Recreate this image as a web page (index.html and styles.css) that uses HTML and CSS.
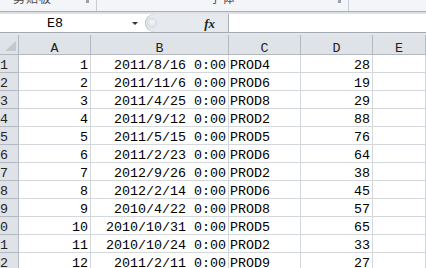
FILE: index.html
```html
<!DOCTYPE html>
<html>
<head>
<meta charset="utf-8">
<link rel="stylesheet" href="styles.css">
</head>
<body>
<div class="ribbon">
  <div class="rgroup g1"><span class="rlabel l1">剪贴板</span><span class="launcher"></span></div>
  <div class="rgroup g2"><span class="rlabel l2">字体</span><span class="launcher"></span></div>
  <div class="rgroup g3"></div>
</div>
<div class="band1"></div>
<div class="fbar">
  <div class="namebox"><span class="nbtext">E8</span><span class="arrow"></span></div>
  <div class="fxzone"><span class="grip"></span><span class="fx">fx</span></div>
  <div class="finput"></div>
</div>
<div class="band2"></div>
<div class="grid">
  <div class="hd corner"><span class="tri"></span></div><div class="hd ch">A</div><div class="hd ch">B</div><div class="hd ch">C</div><div class="hd ch">D</div><div class="hd ch">E</div>

  <div class="hd rh"><span>1</span></div><div class="c r">1</div><div class="c r">2011/8/16 0:00</div><div class="c l">PROD4</div><div class="c r">28</div><div class="c"></div>
  <div class="hd rh"><span>2</span></div><div class="c r">2</div><div class="c r">2011/11/6 0:00</div><div class="c l">PROD6</div><div class="c r">19</div><div class="c"></div>
  <div class="hd rh"><span>3</span></div><div class="c r">3</div><div class="c r">2011/4/25 0:00</div><div class="c l">PROD8</div><div class="c r">29</div><div class="c"></div>
  <div class="hd rh"><span>4</span></div><div class="c r">4</div><div class="c r">2011/9/12 0:00</div><div class="c l">PROD2</div><div class="c r">88</div><div class="c"></div>
  <div class="hd rh"><span>5</span></div><div class="c r">5</div><div class="c r">2011/5/15 0:00</div><div class="c l">PROD5</div><div class="c r">76</div><div class="c"></div>
  <div class="hd rh"><span>6</span></div><div class="c r">6</div><div class="c r">2011/2/23 0:00</div><div class="c l">PROD6</div><div class="c r">64</div><div class="c"></div>
  <div class="hd rh"><span>7</span></div><div class="c r">7</div><div class="c r">2012/9/26 0:00</div><div class="c l">PROD2</div><div class="c r">38</div><div class="c"></div>
  <div class="hd rh"><span>8</span></div><div class="c r">8</div><div class="c r">2012/2/14 0:00</div><div class="c l">PROD6</div><div class="c r">45</div><div class="c"></div>
  <div class="hd rh"><span>9</span></div><div class="c r">9</div><div class="c r">2010/4/22 0:00</div><div class="c l">PROD8</div><div class="c r">57</div><div class="c"></div>
  <div class="hd rh"><span>10</span></div><div class="c r">10</div><div class="c r">2010/10/31 0:00</div><div class="c l">PROD5</div><div class="c r">65</div><div class="c"></div>
  <div class="hd rh"><span>11</span></div><div class="c r">11</div><div class="c r">2010/10/24 0:00</div><div class="c l">PROD2</div><div class="c r">33</div><div class="c"></div>
  <div class="hd rh"><span>12</span></div><div class="c r">12</div><div class="c r">2011/2/11 0:00</div><div class="c l">PROD9</div><div class="c r">27</div><div class="c"></div>
</div>
</body>
</html>
```

FILE: styles.css
```css
html, body {
  margin: 0;
  padding: 0;
  width: 426px;
  height: 268px;
  overflow: hidden;
  background: #ffffff;
}
body {
  font-family: "Liberation Mono", "DejaVu Sans Mono", monospace;
  font-size: 13.33px;
  color: #000;
}

/* ribbon strip (cut off) */
.ribbon {
  display: flex;
  height: 11px;
  background: #f3f5f8;
  border-bottom: 1px solid #a9afb8;
  overflow: hidden;
}
.rgroup {
  position: relative;
  display: flex;
  border-right: 1px solid #c9ced5;
  height: 11px;
}
.g1 { width: 96px; }
.g2 { width: 251px; justify-content: center; }
.g3 { flex: 1; border-right: none; }
.rlabel {
  font-family: "Noto Sans CJK SC", sans-serif;
  font-size: 12px;
  line-height: 12px;
  color: #4c4c4c;
  margin-top: -8px;
}
.l1 { margin-left: 13px; letter-spacing: 1px; }
.l2 { letter-spacing: 1px; }
.launcher {
  position: absolute;
  right: 7px;
  top: 0;
  width: 3px;
  height: 3px;
  background: #9aa0a8;
}

.band1 {
  height: 2px;
  background: #dde1e6;
}

/* formula bar */
.fbar {
  display: flex;
  height: 18px;
  border-bottom: 1px solid #a3a9b1;
  background: #ffffff;
}
.namebox {
  width: 145px;
  display: flex;
  align-items: center;
}
.nbtext {
  width: 110px;
  text-align: center;
  line-height: 15px;
  padding-top: 1px;
}
.arrow {
  margin-left: 22px;
  width: 0;
  height: 0;
  border-left: 3px solid transparent;
  border-right: 3px solid transparent;
  border-top: 3px solid #333;
  margin-top: 1px;
}
.fxzone {
  width: 83px;
  display: flex;
  align-items: center;
  justify-content: space-between;
  background: #e6e9ed;
  border-radius: 9px 0 0 9px;
  box-shadow: inset 1px 0 0 #bfc4cb;
}
.grip {
  width: 8px;
  height: 8px;
  margin-left: 3px;
  border-radius: 50%;
  background: radial-gradient(circle at 50% 40%, #f6f7f9 0%, #dfe2e6 70%, #cfd3d8 100%);
  box-shadow: 0 0 0 1px #d4d8dd;
}
.fx {
  font-family: "Liberation Serif", serif;
  font-style: italic;
  font-weight: bold;
  font-size: 13px;
  line-height: 13px;
  margin-right: 13px;
  color: #222;
}
.finput {
  flex: 1;
  border-left: 1px solid #a9b0b8;
  background: #fff;
}
.band2 {
  height: 2px;
  background: #e3e6ea;
}

/* grid */
.grid {
  display: grid;
  grid-template-columns: 19px 72px 138px 72px 72px 1fr;
  grid-template-rows: 20px;
  grid-auto-rows: 18px;
}
.grid > div {
  box-sizing: border-box;
  border-right: 1px solid #d4d7db;
  border-bottom: 1px solid #d4d7db;
  white-space: nowrap;
  line-height: 15px;
}
.grid > .hd {
  background: #dfe3e8;
  border-right-color: #b3b9c1;
  border-bottom-color: #b3b9c1;
  color: #222;
}
.ch {
  text-align: center;
  padding-top: 6px;
}
.corner {
  display: flex;
  align-items: flex-end;
  justify-content: flex-end;
}
.tri {
  width: 11px;
  height: 10px;
  margin: 0 2px 3px 0;
  background: #c3c8ce;
  clip-path: polygon(100% 0, 100% 100%, 0 100%);
}
.rh {
  display: flex;
  justify-content: flex-end;
  overflow: hidden;
  padding-right: 10px;
  padding-top: 3px;
}
.c {
  padding-top: 3px;
}
.c.r {
  text-align: right;
  padding-right: 2px;
}
.c.l {
  padding-left: 1px;
}
```
